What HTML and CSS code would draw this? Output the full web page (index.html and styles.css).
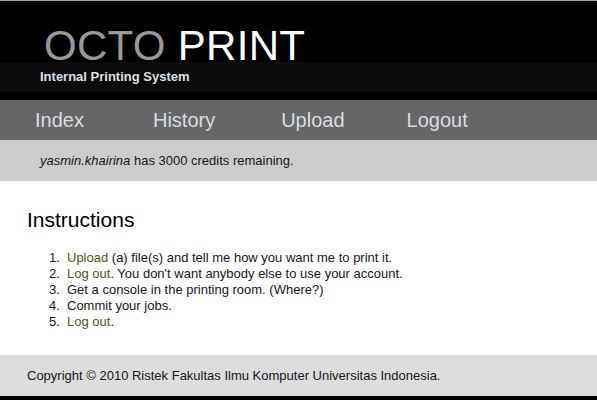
FILE: index.html
```html
<!DOCTYPE html>
<html>
<head>
<meta charset="utf-8">
<title>Octo Print</title>
<link rel="stylesheet" href="styles.css">
</head>
<body>
<div class="page">
  <header class="header">
    <h1 class="title"><span class="title-dim">OCTO</span> <span class="title-bright">PRINT</span></h1>
    <div class="tagline">Internal Printing System</div>
  </header>
  <nav class="nav">
    <a class="nav-link" href="#">Index</a>
    <a class="nav-link" href="#">History</a>
    <a class="nav-link" href="#">Upload</a>
    <a class="nav-link" href="#">Logout</a>
  </nav>
  <div class="credits"><em>yasmin.khairina</em> has 3000 credits remaining.</div>
  <main class="content">
    <h2 class="heading">Instructions</h2>
    <ol class="steps">
      <li><a class="link" href="#">Upload</a> (a) file(s) and tell me how you want me to print it.</li>
      <li><a class="link" href="#">Log out</a>. You don't want anybody else to use your account.</li>
      <li>Get a console in the printing room. (Where?)</li>
      <li>Commit your jobs.</li>
      <li><a class="link" href="#">Log out</a>.</li>
    </ol>
  </main>
  <footer class="footer">Copyright © 2010 Ristek Fakultas Ilmu Komputer Universitas Indonesia.</footer>
</div>
</body>
</html>
```
FILE: styles.css
```css
html, body {
  margin: 0;
  padding: 0;
  background: #000;
}
body {
  font-family: "Liberation Sans", Arial, sans-serif;
  color: #1a1420;
}
.page {
  border-top: 1px solid #a0a0a0;
  background: #fff;
}
.header {
  background: #000;
  height: 99px;
  display: flex;
  flex-direction: column;
}
.title {
  margin: 0;
  padding: 28px 0 0 44px;
  font-size: 42px;
  line-height: 33px;
  font-weight: normal;
  height: 33px;
  letter-spacing: 0.3px;
}
.title-dim { color: #999; }
.title-bright { color: #fff; }
.tagline {
  background: #0b0b0b;
  height: 30px;
  line-height: 30px;
  padding-left: 40px;
  font-size: 13px;
  font-weight: bold;
  color: #dde0e6;
}
.nav {
  background: #666;
  height: 40px;
  display: flex;
  align-items: center;
  padding-left: 35px;
}
.nav-link {
  color: #d8dde2;
  text-decoration: none;
  font-size: 20px;
  margin-right: 69px;
}
.nav-link:nth-child(2) {
  margin-right: 66px;
}
.nav-link:nth-child(3) {
  margin-right: 62px;
}
.credits {
  background: #ccc;
  height: 41px;
  line-height: 41px;
  padding-left: 40px;
  font-size: 13px;
}
.content {
  background: #fff;
  padding: 27px 0 25px 27px;
}
.heading {
  margin: 0 0 18px 0;
  font-size: 21px;
  font-weight: normal;
  line-height: 24px;
  color: #000;
}
.steps {
  margin: 0;
  padding-left: 22px;
  font-size: 13px;
  line-height: 16px;
  list-style: none;
  counter-reset: step;
}
.steps li {
  counter-increment: step;
}
.steps li::before {
  content: counter(step) ".";
  display: inline-block;
  width: 18px;
}
.link {
  color: #4a5a20;
  text-decoration: none;
}
.footer {
  background: #ddd;
  height: 41px;
  line-height: 41px;
  padding-left: 27px;
  font-size: 13px;
}
```
